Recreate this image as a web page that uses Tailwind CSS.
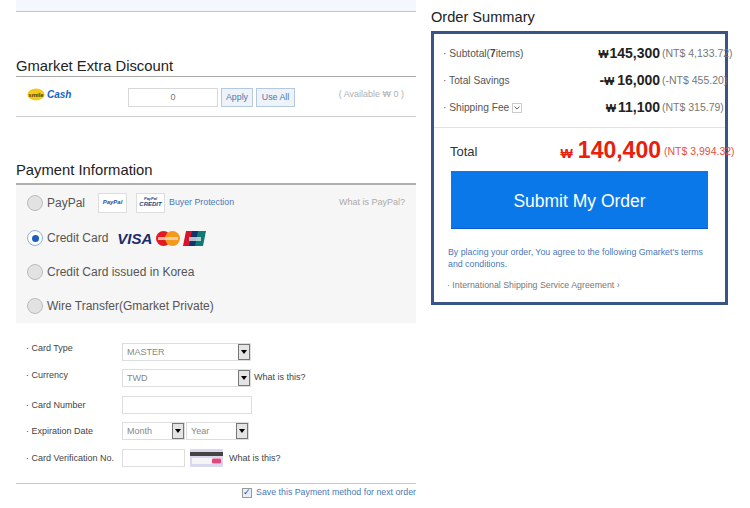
<!DOCTYPE html>
<html lang="en">
<head>
    <meta charset="UTF-8">
    <title>Order Payment</title>
    <script src="https://cdn.jsdelivr.net/npm/@tailwindcss/browser@4"></script>
</head>
<body class="bg-white w-[750px] h-[508px] overflow-hidden font-['Liberation_Sans',Arial,sans-serif] text-[#555]">
<div class="flex items-start pl-[16px]">

    <!-- left column -->
    <div class="w-[400px] shrink-0">
        <div class="h-[12px] bg-[#f4f7fb] border-b border-[#c4c4c4]"></div>

        <h2 class="mt-[44px] h-[20px] leading-[20px] text-[14.8px] text-[#222]">Gmarket Extra Discount</h2>
        <div class="h-[40px] border-t border-[#a8a8a8] flex items-start">
            <div class="w-[112px] pl-[11px] pt-[10px] flex items-center gap-[2px]">
                <svg width="18" height="13" viewBox="0 0 18 13"><ellipse cx="9" cy="6.5" rx="8.5" ry="6" fill="#f5c81e"/><text x="9" y="8.5" text-anchor="middle" font-size="6" font-weight="700" fill="#4a3c08" font-family="Liberation Sans">smile</text></svg>
                <span class="text-[10px] font-bold italic text-[#1463c8]">Cash</span>
            </div>
            <div class="mt-[11px] w-[90px] h-[19px] border border-[#d8d8d8] text-center text-[9px] leading-[17px] text-[#777]">0</div>
            <button class="mt-[11px] ml-[3px] w-[32px] h-[19px] border border-[#b4c8e0] bg-[#eef3f9] text-[8.8px] text-[#4a78b0]">Apply</button>
            <button class="mt-[11px] ml-[3px] w-[39px] h-[19px] border border-[#b4c8e0] bg-[#eef3f9] text-[8.8px] text-[#4a78b0]">Use All</button>
            <span class="ml-auto mr-[12px] mt-[11px] text-[9px] text-[#b0b0b0]">( Available ₩ 0 )</span>
        </div>
        <div class="h-px bg-[#cfcfcf]"></div>

        <h2 class="mt-[43px] h-[20px] leading-[20px] text-[14.8px] text-[#222]">Payment Information</h2>
        <div class="mt-[3px] border-t-2 border-[#b0b0b0] bg-[#f6f6f6] h-[140px] text-[12px] text-[#555]">
            <div class="h-[35px] pl-[11px] pr-[11px] flex items-center">
                <span class="size-[16px] rounded-full border border-[#bbb] bg-[#e2e2e2]"></span>
                <span class="ml-[4px] text-[12px]">PayPal</span>
                <span class="ml-[13px] w-[29px] h-[20px] border border-[#ddd] bg-white flex items-center justify-center text-[6px] font-bold italic text-[#1d4f9c]">PayPal</span>
                <span class="ml-[9px] w-[29px] h-[20px] border border-[#ddd] bg-white flex flex-col items-center justify-center text-[6px] leading-[7px] font-bold italic text-[#1d3f7c]"><span class="text-[4px] leading-[4px]">PayPal</span>CREDIT</span>
                <span class="ml-[4px] text-[8.8px] text-[#4a78b8]">Buyer Protection</span>
                <span class="ml-auto text-[9px] text-[#aaa]">What is PayPal?</span>
            </div>
            <div class="h-[35px] pt-px pl-[11px] flex items-center">
                <span class="size-[16px] rounded-full border border-[#8ab0e4] bg-white flex items-center justify-center"><span class="size-[7px] rounded-full bg-[#1d5fb8]"></span></span>
                <span class="ml-[4px]">Credit Card</span>
                <span class="ml-[9px] text-[15px] leading-[15px] font-bold italic text-[#1a2a6c]">VISA</span>
                <svg class="ml-[4px]" width="24" height="15" viewBox="0 0 24 15"><circle cx="7.5" cy="7.5" r="7.5" fill="#e21b23"/><circle cx="16.5" cy="7.5" r="7.5" fill="#f4991c"/><rect x="2" y="6" width="20" height="3" fill="#f3d9c0" opacity=".8"/></svg>
                <svg class="ml-[3px]" width="23" height="15" viewBox="0 0 23 15"><path d="M3 0h8L8 15H0z" fill="#d8132a"/><path d="M9 0h8l-3 15H6z" fill="#12356f"/><path d="M15 0h8l-3 15h-8z" fill="#0f7a74"/><rect x="6" y="6" width="12" height="4" fill="#e8eef0" opacity=".75"/></svg>
            </div>
            <div class="h-[34px] pl-[11px] flex items-center">
                <span class="size-[16px] rounded-full border border-[#bbb] bg-[#e2e2e2]"></span>
                <span class="ml-[4px]">Credit Card issued in Korea</span>
            </div>
            <div class="h-[34px] pl-[11px] flex items-center">
                <span class="size-[16px] rounded-full border border-[#bbb] bg-[#e2e2e2]"></span>
                <span class="ml-[4px]">Wire Transfer(Gmarket Private)</span>
            </div>
        </div>

        <!-- card form -->
        <div class="mt-[20px] text-[9px] text-[#444]">
            <div class="h-[26px] flex items-start">
                <span class="w-[106px] pl-[10px] leading-[11px]">· Card Type</span>
                <div class="w-[129px] h-[18px] border border-[#ddd] flex">
                    <span class="flex-1 pl-[4px] leading-[16px] text-[#888]">MASTER</span>
                    <span class="w-[12px] border border-[#777] bg-[#e4e4e4] flex items-center justify-center"><span class="border-x-[3px] border-t-[4px] border-x-transparent border-t-black"></span></span>
                </div>
            </div>
            <div class="h-[27px] flex items-start">
                <span class="w-[106px] pl-[10px] leading-[12px]">· Currency</span>
                <div class="w-[129px] h-[18px] border border-[#ddd] flex">
                    <span class="flex-1 pl-[4px] leading-[16px] text-[#888]">TWD</span>
                    <span class="w-[12px] border border-[#777] bg-[#e4e4e4] flex items-center justify-center"><span class="border-x-[3px] border-t-[4px] border-x-transparent border-t-black"></span></span>
                </div>
                <span class="ml-[3px] leading-[16px]">What is this?</span>
            </div>
            <div class="h-[26px] flex items-start">
                <span class="w-[106px] pl-[10px] leading-[18px]">· Card Number</span>
                <div class="w-[130px] h-[18px] border border-[#ddd]"></div>
            </div>
            <div class="h-[27px] flex items-start">
                <span class="w-[106px] pl-[10px] leading-[18px]">· Expiration Date</span>
                <div class="w-[63px] h-[18px] border border-[#ddd] flex">
                    <span class="flex-1 pl-[4px] leading-[16px] text-[#888]">Month</span>
                    <span class="w-[12px] border border-[#777] bg-[#e4e4e4] flex items-center justify-center"><span class="border-x-[3px] border-t-[4px] border-x-transparent border-t-black"></span></span>
                </div>
                <div class="ml-px w-[63px] h-[18px] border border-[#ddd] flex">
                    <span class="flex-1 pl-[4px] leading-[16px] text-[#888]">Year</span>
                    <span class="w-[12px] border border-[#777] bg-[#e4e4e4] flex items-center justify-center"><span class="border-x-[3px] border-t-[4px] border-x-transparent border-t-black"></span></span>
                </div>
            </div>
            <div class="h-[34px] flex items-start">
                <span class="w-[106px] pl-[10px] leading-[18px]">· Card Verification No.</span>
                <div class="w-[63px] h-[18px] border border-[#ddd]"></div>
                <svg class="ml-[5px]" width="33" height="18" viewBox="0 0 33 18"><rect width="33" height="18" rx="1" fill="#d8d8f0"/><rect y="3" width="33" height="4" fill="#444"/><rect x="2" y="9" width="29" height="6" fill="#f4f4f4"/><rect x="22" y="9.5" width="9" height="5" rx="1" fill="#e0487a"/></svg>
                <span class="ml-[6px] mt-[3px]">What is this?</span>
            </div>
        </div>
        <div class="border-t border-[#c8c8c8] flex justify-end items-center h-[18px] text-[8.8px] text-[#4a78b8]">
            <span class="size-[10px] border border-[#999] bg-[#e8eef6] mr-[4px] flex items-center justify-center text-[9px] leading-[9px] text-[#1d4f9c]">✓</span>
            Save this Payment method for next order
        </div>
    </div>

    <!-- right column -->
    <div class="ml-[15px] w-[297px] shrink-0">
        <h2 class="mt-[7px] h-[20px] leading-[20px] text-[14.6px] text-[#222]">Order Summary</h2>
        <div class="mt-[4px] h-[274px] border-[3px] border-[#3a5488]">
            <div class="h-[94px] px-[9px] pt-[6px] border-b border-[#e2e2e2] text-[10.2px]">
                <div class="h-[27px] flex items-center whitespace-nowrap">
                    <span class="w-[110px]">· Subtotal(<b class="text-[#444]">7</b>items)</span>
                    <span class="ml-auto text-[14px] font-bold text-[#222]"><span class="text-[10.5px] mr-px">₩</span>145,300</span>
                    <span class="w-[69px] ml-[2px] shrink-0 -mr-[15px] text-[10.5px] text-[#777]">(NT$ 4,133.72)</span>
                </div>
                <div class="h-[27px] flex items-center whitespace-nowrap">
                    <span class="w-[110px]">· Total Savings</span>
                    <span class="ml-auto text-[14px] font-bold text-[#222]">-<span class="text-[10.5px] mr-[3px]">₩</span>16,000</span>
                    <span class="w-[69px] ml-[2px] shrink-0 -mr-[15px] text-[10.5px] text-[#777]">(-NT$ 455.20)</span>
                </div>
                <div class="h-[27px] flex items-center whitespace-nowrap">
                    <span>· Shipping Fee</span>
                    <span class="ml-[3px] size-[10px] border border-[#ccc] flex items-center justify-center">
                        <svg width="6" height="4" viewBox="0 0 6 4"><path d="M.5.5 3 3 5.500.5" fill="none" stroke="#666"/></svg>
                    </span>
                    <span class="ml-auto text-[14px] font-bold text-[#222]"><span class="text-[10.5px] mr-[2px]">₩</span>11,100</span>
                    <span class="w-[69px] ml-[2px] shrink-0 -mr-[15px] text-[10.5px] text-[#777]">(NT$ 315.79)</span>
                </div>
            </div>
            <div class="h-[43px] pl-[16px] pr-[9px] flex items-center whitespace-nowrap">
                <span class="mt-[4px] text-[13px] text-[#333]">Total</span>
                <span class="ml-auto mt-[1px] text-[23px] font-bold text-[#e8200c]"><span class="text-[13px] mr-[5px]">₩</span>140,400</span>
                <span class="w-[69px] ml-[3px] mt-[4px] shrink-0 -mr-[17px] text-[10.5px] text-[#e8503c]">(NT$ 3,994.32)</span>
            </div>
            <div class="mx-[17px] h-[58px] pt-[3px] bg-[#0a78e8] border-b border-[#0a5ccc] flex items-center justify-center text-[17.500px] text-white">Submit My Order</div>
            <p class="mt-[17px] mx-[14px] text-[8.8px] leading-[12px] text-[#4a78b8]">By placing your order, You agree to the following Gmarket's terms and conditions.</p>
            <p class="mt-[9px] mx-[13px] text-[8.8px] leading-[12px] text-[#777]">· International Shipping Service Agreement ›</p>
        </div>
    </div>
</div>
</body>
</html>
